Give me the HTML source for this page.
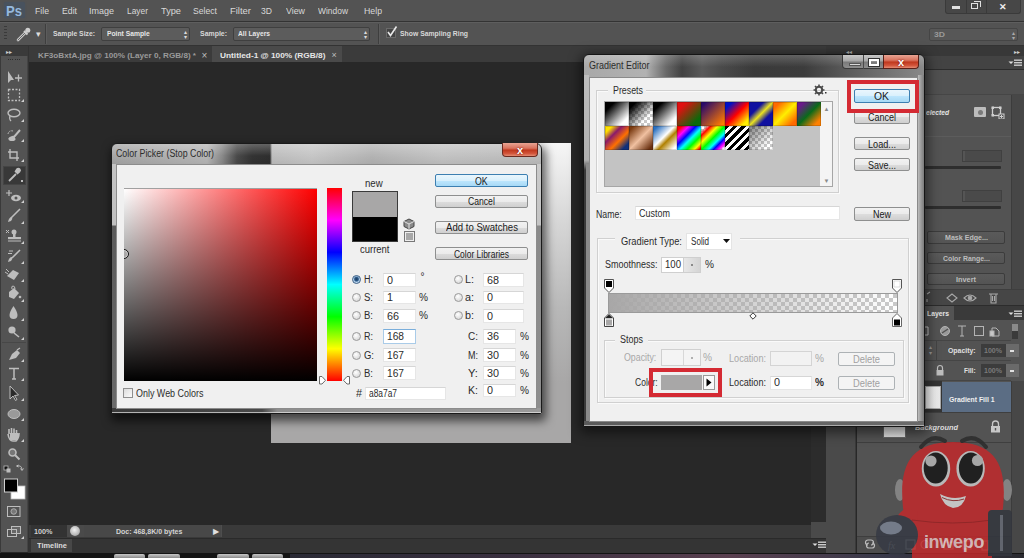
<!DOCTYPE html>
<html><head><meta charset="utf-8"><style>
html,body{margin:0;padding:0;}
body{width:1024px;height:558px;overflow:hidden;position:relative;background:#282828;font-family:"Liberation Sans",sans-serif;}
body div{position:absolute;box-sizing:border-box;}
.t{white-space:pre;line-height:1;}

</style></head><body>
<div style="left:0px;top:0px;width:1024px;height:21px;background:#535353;"></div>
<div style="left:0px;top:21px;width:1024px;height:1px;background:#333333;"></div>
<div style="left:0px;top:22px;width:1024px;height:1px;background:#5e5e5e;"></div>
<div style="left:4px;top:2px;width:21px;height:16px;background:#48525e;border-radius:2px;box-shadow:0 0 2px #48525e;"></div>
<div class="t" style="left:5.5px;top:3.4px;font-size:15px;color:#94b8de;transform:scaleX(0.871);transform-origin:0 0;font-weight:bold;">Ps</div>
<div class="t" style="left:35.0px;top:6.9px;font-size:9px;color:#d8d8d8;transform:scaleX(0.964);transform-origin:0 0;">File</div>
<div class="t" style="left:61.5px;top:6.9px;font-size:9px;color:#d8d8d8;transform:scaleX(0.967);transform-origin:0 0;">Edit</div>
<div class="t" style="left:89.0px;top:6.9px;font-size:9px;color:#d8d8d8;">Image</div>
<div class="t" style="left:127.0px;top:6.9px;font-size:9px;color:#d8d8d8;transform:scaleX(0.933);transform-origin:0 0;">Layer</div>
<div class="t" style="left:161.0px;top:6.9px;font-size:9px;color:#d8d8d8;transform:scaleX(1.025);transform-origin:0 0;">Type</div>
<div class="t" style="left:193.0px;top:6.9px;font-size:9px;color:#d8d8d8;transform:scaleX(0.959);transform-origin:0 0;">Select</div>
<div class="t" style="left:230.0px;top:6.9px;font-size:9px;color:#d8d8d8;transform:scaleX(1.050);transform-origin:0 0;">Filter</div>
<div class="t" style="left:261.0px;top:6.9px;font-size:9px;color:#d8d8d8;transform:scaleX(0.955);transform-origin:0 0;">3D</div>
<div class="t" style="left:285.6px;top:6.9px;font-size:9px;color:#d8d8d8;transform:scaleX(0.981);transform-origin:0 0;">View</div>
<div class="t" style="left:317.5px;top:6.9px;font-size:9px;color:#d8d8d8;transform:scaleX(0.937);transform-origin:0 0;">Window</div>
<div class="t" style="left:363.5px;top:6.9px;font-size:9px;color:#d8d8d8;transform:scaleX(0.972);transform-origin:0 0;">Help</div>
<div style="left:945px;top:0px;width:76px;height:14px;background:#474747;border:1px solid #3a3a3a;border-top:none;border-radius:0 0 3px 3px;"></div>
<div style="left:966px;top:0px;width:1px;height:14px;background:#3a3a3a;"></div>
<div style="left:986px;top:0px;width:1px;height:14px;background:#3a3a3a;"></div>
<div style="left:952px;top:6px;width:8px;height:3px;background:#e0e0e0;"></div>
<div style="left:971px;top:3px;width:7px;height:6px;border:1.5px solid #e0e0e0;"></div>
<div style="left:974px;top:1px;width:7px;height:6px;border:1.5px solid #e0e0e0;border-left:none;border-bottom:none;"></div>
<div class="t" style="left:999.0px;top:3.2px;font-size:9px;color:#eeeeee;font-weight:bold;">✕</div>
<div style="left:0px;top:23px;width:1024px;height:22px;background:#535353;"></div>
<div style="left:0px;top:45px;width:1024px;height:1px;background:#333333;"></div>
<div style="left:4px;top:26px;width:3px;height:1px;background:#3a3a3a;"></div>
<div style="left:4px;top:29px;width:3px;height:1px;background:#3a3a3a;"></div>
<div style="left:4px;top:32px;width:3px;height:1px;background:#3a3a3a;"></div>
<div style="left:4px;top:35px;width:3px;height:1px;background:#3a3a3a;"></div>
<div style="left:4px;top:38px;width:3px;height:1px;background:#3a3a3a;"></div>
<svg style="position:absolute;left:10px;top:22px" width="24" height="22" viewBox="10 22 24 22"><path d="M18 40 L25 33" stroke="#c8c8c8" stroke-width="2.6" stroke-linecap="round"/><path d="M18 40 L25 33" stroke="#5a5a5a" stroke-width="0.9" stroke-linecap="round"/><path d="M24 31 L27.5 34.5" stroke="#cfcfcf" stroke-width="2"/><circle cx="27.8" cy="30.2" r="2.5" fill="#cfcfcf"/></svg>
<div class="t" style="left:36.0px;top:29.7px;font-size:9px;color:#dddddd;">▾</div>
<div style="left:45px;top:24px;width:1px;height:20px;background:#3e3e3e;"></div>
<div style="left:46px;top:24px;width:1px;height:20px;background:#5c5c5c;"></div>
<div class="t" style="left:53.0px;top:30.2px;font-size:8px;color:#d8d8d8;transform:scaleX(0.851);transform-origin:0 0;font-weight:bold;">Sample Size:</div>
<div style="left:101px;top:27px;width:89px;height:14px;background:#5c5c5c;border:1px solid #3f3f3f;border-radius:2px;"></div>
<div class="t" style="left:106.8px;top:30.2px;font-size:8px;color:#e6e6e6;transform:scaleX(0.842);transform-origin:0 0;font-weight:bold;">Point Sample</div>
<div class="t" style="left:183.5px;top:28.5px;font-size:6px;color:#dddddd;">▴</div>
<div class="t" style="left:183.5px;top:33.5px;font-size:6px;color:#dddddd;">▾</div>
<div class="t" style="left:200.0px;top:30.2px;font-size:8px;color:#d8d8d8;transform:scaleX(0.867);transform-origin:0 0;font-weight:bold;">Sample:</div>
<div style="left:233px;top:27px;width:137px;height:14px;background:#5c5c5c;border:1px solid #3f3f3f;border-radius:2px;"></div>
<div class="t" style="left:238.0px;top:30.2px;font-size:8px;color:#e6e6e6;transform:scaleX(0.837);transform-origin:0 0;font-weight:bold;">All Layers</div>
<div class="t" style="left:363.5px;top:28.5px;font-size:6px;color:#dddddd;">▴</div>
<div class="t" style="left:363.5px;top:33.5px;font-size:6px;color:#dddddd;">▾</div>
<div style="left:378px;top:24px;width:1px;height:20px;background:#3e3e3e;"></div>
<div style="left:379px;top:24px;width:1px;height:20px;background:#5c5c5c;"></div>
<div style="left:386px;top:28px;width:10px;height:10px;background:#444;border:1px solid #6a6a6a;"></div>
<svg style="position:absolute;left:386px;top:25px" width="12" height="13" viewBox="0 0 12 13"><path d="M2 7 L4.5 10.5 L10.5 1.5" stroke="#e8e8e8" stroke-width="1.6" fill="none"/></svg>
<div class="t" style="left:399.7px;top:30.2px;font-size:8px;color:#d8d8d8;transform:scaleX(0.855);transform-origin:0 0;font-weight:bold;">Show Sampling Ring</div>
<div style="left:929px;top:28px;width:89px;height:13px;background:#575757;border:1px solid #454545;border-radius:2px;"></div>
<div class="t" style="left:934.0px;top:31.1px;font-size:8px;color:#9a9a9a;transform:scaleX(1.075);transform-origin:0 0;font-weight:bold;">3D</div>
<div class="t" style="left:1011.5px;top:29.5px;font-size:6px;color:#aaaaaa;">▴</div>
<div class="t" style="left:1011.5px;top:34.5px;font-size:6px;color:#aaaaaa;">▾</div>
<div style="left:29px;top:46px;width:797px;height:16px;background:#3b3b3b;"></div>
<div class="t" style="left:37.7px;top:51.6px;font-size:8px;color:#9a9a9a;transform:scaleX(1.017);transform-origin:0 0;font-weight:bold;">KF3oBxtA.jpg @ 100% (Layer 0, RGB/8) *</div>
<div class="t" style="left:201.6px;top:50.8px;font-size:10px;color:#bdbdbd;">×</div>
<div style="left:212px;top:46px;width:130px;height:16px;background:#4a4a4a;"></div>
<div class="t" style="left:220.0px;top:51.6px;font-size:8px;color:#e6e6e6;transform:scaleX(1.038);transform-origin:0 0;font-weight:bold;">Untitled-1 @ 100% (RGB/8)</div>
<div class="t" style="left:331.4px;top:51.2px;font-size:9px;color:#bdbdbd;">×</div>
<div style="left:0px;top:46px;width:29px;height:10px;background:#3a3a3a;"></div>
<div class="t" style="left:6.0px;top:48.5px;font-size:6px;color:#cfcfcf;">▸▸</div>
<div style="left:1px;top:56px;width:27px;height:496px;background:#535353;border-right:1px solid #444;"></div>
<div style="left:0px;top:46px;width:1px;height:512px;background:#3a3a3a;"></div>
<div style="left:8.0px;top:59px;width:1px;height:1px;background:#2f2f2f;"></div>
<div style="left:10.2px;top:59px;width:1px;height:1px;background:#2f2f2f;"></div>
<div style="left:12.4px;top:59px;width:1px;height:1px;background:#2f2f2f;"></div>
<div style="left:14.600000000000001px;top:59px;width:1px;height:1px;background:#2f2f2f;"></div>
<div style="left:16.8px;top:59px;width:1px;height:1px;background:#2f2f2f;"></div>
<div style="left:19.0px;top:59px;width:1px;height:1px;background:#2f2f2f;"></div>
<div style="left:3px;top:166px;width:23px;height:19px;background:#383838;border:1px solid #444;"></div>
<div style="left:28px;top:46px;width:1px;height:510px;background:#333;"></div>
<div style="left:29px;top:525px;width:797px;height:13px;background:#3a3a3a;"></div>
<div style="left:31px;top:525px;width:36px;height:12px;background:#333333;"></div>
<div class="t" style="left:33.7px;top:527.9px;font-size:8px;color:#d0d0d0;transform:scaleX(0.904);transform-origin:0 0;font-weight:bold;">100%</div>
<div style="left:67px;top:525px;width:17px;height:12px;background:#4a4a4a;"></div>
<div style="left:70px;top:526px;width:10px;height:10px;background:radial-gradient(circle at 45% 40%,#f0f0f0,#b8b8b8 60%,#888 100%);border-radius:50%;"></div>
<div style="left:211px;top:525px;width:11px;height:12px;background:#4e4e4e;border-left:1px solid #3a3a3a;"></div>
<div style="left:84px;top:525px;width:137px;height:12px;background:#484848;"></div>
<div class="t" style="left:115.7px;top:527.9px;font-size:8px;color:#d4d4d4;transform:scaleX(0.878);transform-origin:0 0;font-weight:bold;">Doc: 468,8K/0 bytes</div>
<div class="t" style="left:213.0px;top:527.6px;font-size:8px;color:#e0e0e0;">▶</div>
<div style="left:29px;top:538px;width:797px;height:15px;background:#343434;border-top:1px solid #2a2a2a;"></div>
<div style="left:31px;top:539px;width:41px;height:13px;background:#474747;"></div>
<div class="t" style="left:36.6px;top:542.4px;font-size:8px;color:#dcdcdc;transform:scaleX(0.928);transform-origin:0 0;font-weight:bold;">Timeline</div>
<div style="left:0px;top:553px;width:1024px;height:5px;background:#141414;"></div>
<div style="left:114px;top:554px;width:31px;height:4px;background:linear-gradient(#c8c8c8,#8a8a8a);border-radius:2px 2px 0 0;"></div>
<div style="left:148px;top:554px;width:32px;height:4px;background:linear-gradient(#c8c8c8,#8a8a8a);border-radius:2px 2px 0 0;"></div>
<div style="left:217px;top:554px;width:32px;height:4px;background:linear-gradient(#c8c8c8,#8a8a8a);border-radius:2px 2px 0 0;"></div>
<div style="left:252px;top:554px;width:31px;height:4px;background:linear-gradient(#c8c8c8,#8a8a8a);border-radius:2px 2px 0 0;"></div>
<div style="left:290px;top:554px;width:734px;height:4px;background:linear-gradient(to right,#2a2a35,#3a3040 30%,#5a4050 60%,#3a3a4a 80%,#2a2a30);"></div>
<div style="left:826px;top:46px;width:198px;height:10px;background:#383838;"></div>
<div class="t" style="left:846.0px;top:48.5px;font-size:6px;color:#bdbdbd;">◂◂</div>
<div class="t" style="left:1014.0px;top:48.5px;font-size:6px;color:#d0d0d0;">▸▸</div>
<div style="left:826px;top:56px;width:30px;height:497px;background:#4a4a4a;border-right:1px solid #3a3a3a;"></div>
<div style="left:826px;top:56px;width:30px;height:13px;background:#3c3c3c;"></div>
<div style="left:857px;top:56px;width:167px;height:497px;background:#535353;"></div>
<div style="left:857px;top:56px;width:167px;height:13px;background:#434343;"></div>
<div style="left:857px;top:69px;width:167px;height:1px;background:#2c2c2c;"></div>
<svg style="position:absolute;left:1008px;top:58px" width="14" height="9" viewBox="0 0 14 9"><path d="M0.5 3.5 L3 6 L5.5 3.5Z" fill="#ddd"/><rect x="6" y="1.5" width="8" height="1.4" fill="#ccc"/><rect x="6" y="4" width="8" height="1.4" fill="#ccc"/><rect x="6" y="6.5" width="8" height="1.4" fill="#ccc"/></svg>
<div style="left:857px;top:70px;width:167px;height:24px;background:#505050;"></div>
<div style="left:857px;top:94px;width:167px;height:1px;background:#464646;"></div>
<div style="left:1011px;top:95px;width:13px;height:195px;background:#474747;border-left:1px solid #3c3c3c;"></div>
<div class="t" style="left:926.0px;top:108.6px;font-size:8px;color:#e4e4e4;transform:scaleX(0.834);transform-origin:0 0;font-style:italic;font-weight:bold;">elected</div>
<div style="left:974px;top:107px;width:12px;height:10px;background:#bdbdbd;border-radius:1px;"></div>
<div style="left:977.5px;top:109.5px;width:5px;height:5px;background:#7a7a7a;border-radius:50%;"></div>
<svg style="position:absolute;left:991px;top:106px" width="14" height="13" viewBox="0 0 14 13"><rect x="1.5" y="1.5" width="8" height="8" fill="none" stroke="#cfcfcf" stroke-width="1.3"/><rect x="0.5" y="0.5" width="2.5" height="2.5" fill="#cfcfcf"/><rect x="8" y="0.5" width="2.5" height="2.5" fill="#cfcfcf"/><rect x="0.5" y="8" width="2.5" height="2.5" fill="#cfcfcf"/><rect x="8" y="8" width="5" height="5" fill="#535353" stroke="#cfcfcf" stroke-width="1"/><path d="M10.5 9 V12 M9 10.5 H12" stroke="#cfcfcf" stroke-width="1"/></svg>
<div style="left:857px;top:136px;width:154px;height:1px;background:#5c5c5c;"></div>
<div style="left:962px;top:150px;width:40px;height:12px;background:#4a4a4a;border:1px solid #404040;box-shadow:inset 2px 0 0 #555;"></div>
<div style="left:925px;top:166px;width:76px;height:3px;background:#2e2e2e;border-radius:1px;"></div>
<div style="left:962px;top:190px;width:40px;height:12px;background:#4a4a4a;border:1px solid #404040;box-shadow:inset 2px 0 0 #555;"></div>
<div style="left:925px;top:206px;width:76px;height:3px;background:#2e2e2e;border-radius:1px;"></div>
<div style="left:927px;top:231px;width:78px;height:12.5px;background:linear-gradient(#5a5a5a,#545454);border:1px solid #3c3c3c;border-radius:2px;"></div>
<div class="t" style="left:944.5px;top:234.2px;font-size:8px;color:#bdbdbd;transform:scaleX(0.887);transform-origin:0 0;font-weight:bold;">Mask Edge...</div>
<div style="left:927px;top:252px;width:78px;height:12px;background:linear-gradient(#5a5a5a,#545454);border:1px solid #3c3c3c;border-radius:2px;"></div>
<div class="t" style="left:942.6px;top:254.9px;font-size:8px;color:#bdbdbd;transform:scaleX(0.863);transform-origin:0 0;font-weight:bold;">Color Range...</div>
<div style="left:927px;top:272.6px;width:78px;height:12.399999999999977px;background:linear-gradient(#5a5a5a,#545454);border:1px solid #3c3c3c;border-radius:2px;"></div>
<div class="t" style="left:956.0px;top:275.7px;font-size:8px;color:#bdbdbd;transform:scaleX(0.918);transform-origin:0 0;font-weight:bold;">Invert</div>
<div style="left:857px;top:289px;width:167px;height:16px;background:#464646;border-top:1px solid #3e3e3e;"></div>
<svg style="position:absolute;left:925px;top:290px" width="90" height="15" viewBox="0 0 90 15"><g fill="none" stroke="#a8a8a8" stroke-width="1.1"><path d="M2 4 L5 2 M2 9 L2 12"/><path d="M22 8 L27 4 L32 8 L27 12 Z"/><path d="M39 8 Q45 2 51 8 Q45 14 39 8 Z"/><circle cx="45" cy="8" r="1.8" fill="#a8a8a8"/><path d="M64 4 H73 M66 4 V13 H71 V4 M67.5 6 V11 M69.5 6 V11"/></g></svg>
<div style="left:857px;top:305px;width:167px;height:1px;background:#2c2c2c;"></div>
<div style="left:857px;top:306px;width:167px;height:14px;background:#3a3a3a;"></div>
<div style="left:924px;top:306px;width:30px;height:14px;background:#535353;"></div>
<div class="t" style="left:927.0px;top:309.9px;font-size:8px;color:#e6e6e6;transform:scaleX(0.853);transform-origin:0 0;font-weight:bold;">Layers</div>
<svg style="position:absolute;left:1008px;top:309px" width="14" height="9" viewBox="0 0 14 9"><path d="M0.5 3.5 L3 6 L5.5 3.5Z" fill="#ddd"/><rect x="6" y="1.5" width="8" height="1.4" fill="#ccc"/><rect x="6" y="4" width="8" height="1.4" fill="#ccc"/><rect x="6" y="6.5" width="8" height="1.4" fill="#ccc"/></svg>
<svg style="position:absolute;left:924px;top:322px" width="100" height="18" viewBox="0 0 100 18"><g fill="none" stroke="#b4b4b4" stroke-width="1"><circle cx="21" cy="9" r="4.5" fill="#9a9a9a"/><path d="M18 11 L24 7" stroke="#535353" stroke-width="1.5"/><path d="M34 4 H42 M38 4 V14 M36 14 H40"/><rect x="50.5" y="4.5" width="9" height="9"/><path d="M68 6 H72 L75 9 V14 H68 Z"/><rect x="66" y="9" width="4" height="5" fill="#c8c8c8"/></g><rect x="88" y="2" width="6" height="15" fill="#3a3a3a"/><rect x="88" y="2" width="6" height="7" fill="#8a8a8a"/><path d="M1 5 H4 V13 H1" stroke="#c8c8c8" fill="none"/></svg>
<div style="left:857px;top:340px;width:154px;height:1px;background:#454545;"></div>
<div style="left:924px;top:341px;width:13px;height:19px;border-right:1px solid #444;"></div>
<div class="t" style="left:928.5px;top:343.5px;font-size:6px;color:#999;">▴</div>
<div class="t" style="left:928.5px;top:349.5px;font-size:6px;color:#999;">▾</div>
<div class="t" style="left:948.0px;top:346.9px;font-size:8px;color:#e0e0e0;transform:scaleX(0.862);transform-origin:0 0;font-weight:bold;">Opacity:</div>
<div style="left:980.5px;top:343.5px;width:25px;height:13px;background:#3c3c3c;"></div>
<div class="t" style="left:983.7px;top:346.9px;font-size:8px;color:#7a7a7a;transform:scaleX(0.879);transform-origin:0 0;font-weight:bold;">100%</div>
<div style="left:1006px;top:343.5px;width:13px;height:13px;background:#6a6a6a;"></div>
<div style="left:1010px;top:349.5px;width:4px;height:2px;background:#e0e0e0;"></div>
<div style="left:857px;top:360px;width:154px;height:1px;background:#454545;"></div>
<svg style="position:absolute;left:935px;top:364px" width="10" height="12" viewBox="0 0 10 12"><path d="M2.5 6 V4 A2.5 2.5 0 0 1 7.5 4 V6" stroke="#bdbdbd" stroke-width="1.2" fill="none"/><rect x="1.5" y="6" width="7" height="5.5" fill="#bdbdbd"/></svg>
<div class="t" style="left:964.0px;top:366.9px;font-size:8px;color:#e0e0e0;transform:scaleX(0.816);transform-origin:0 0;font-weight:bold;">Fill:</div>
<div style="left:980.5px;top:364px;width:25px;height:12.5px;background:#3c3c3c;"></div>
<div class="t" style="left:983.7px;top:366.9px;font-size:8px;color:#7a7a7a;transform:scaleX(0.879);transform-origin:0 0;font-weight:bold;">100%</div>
<div style="left:1006px;top:364px;width:13px;height:12.5px;background:#6a6a6a;"></div>
<div style="left:1010px;top:369.5px;width:4px;height:2px;background:#e0e0e0;"></div>
<div style="left:857px;top:380px;width:154px;height:1px;background:#454545;"></div>
<div style="left:857px;top:382px;width:154px;height:30px;background:#5b6d84;"></div>
<div style="left:923px;top:381px;width:19px;height:32px;background:#353535;"></div>
<div style="left:924.8px;top:386px;width:16.2px;height:23px;background:linear-gradient(to right,#f6f6f6,#e8e8e8);border:1px solid #aaa;"></div>
<div style="left:883px;top:386px;width:23px;height:23px;background:#f0f0f0;border:1px solid #888;"></div>
<div class="t" style="left:948.5px;top:395.5px;font-size:8px;color:#f0f0f0;transform:scaleX(0.853);transform-origin:0 0;font-weight:bold;">Gradient Fill 1</div>
<div style="left:857px;top:412px;width:154px;height:1px;background:#3f3f3f;"></div>
<div style="left:883px;top:420px;width:23px;height:18px;background:linear-gradient(#f4f4f4,#e0e0e0);border:1px solid #666;"></div>
<div class="t" style="left:915.0px;top:424.1px;font-size:8px;color:#dddddd;transform:scaleX(0.921);transform-origin:0 0;font-style:italic;font-weight:bold;">Background</div>
<svg style="position:absolute;left:990px;top:420px" width="11" height="13" viewBox="0 0 11 13"><path d="M2.5 6 V4 A3 3 0 0 1 8.5 4 V6" stroke="#c8c8c8" stroke-width="1.3" fill="none"/><rect x="1" y="6" width="9" height="6.5" fill="#c8c8c8"/><rect x="4.8" y="8" width="1.4" height="2.5" fill="#535353"/></svg>
<div style="left:857px;top:442px;width:154px;height:1px;background:#3f3f3f;"></div>
<div style="left:1011px;top:381px;width:13px;height:172px;background:#474747;border-left:1px solid #3c3c3c;"></div>
<div style="left:857px;top:536px;width:154px;height:17px;background:#4c4c4c;border-top:1px solid #3e3e3e;"></div>
<svg style="position:absolute;left:860px;top:538px" width="150" height="14" viewBox="0 0 150 14"><g fill="none" stroke="#bdbdbd" stroke-width="1.2"><path d="M8 7 a2.5 2.5 0 0 1 0-5 h3 a2.5 2.5 0 0 1 0 5 M12 5 a2.5 2.5 0 0 1 0 5 h-3 a2.5 2.5 0 0 1 0-5"/><text x="28" y="11" font-size="10" font-style="italic" fill="#bdbdbd" stroke="none" font-family="Liberation Serif">fx</text><rect x="46" y="2" width="9" height="9"/><circle cx="65" cy="6.5" r="4"/><path d="M84 4 H93 V11 H84 Z M84 4 L86 2 H89"/><rect x="103" y="3" width="8" height="8"/><path d="M121 3 H129 M122 4 V12 H128 V4"/></g></svg>
<div style="left:811px;top:62px;width:15px;height:463px;background:#2c2c2c;"></div>
<div style="left:811px;top:522px;width:15px;height:16px;background:#4a4a4a;"></div>
<svg style="position:absolute;left:812px;top:540px" width="14" height="10" viewBox="0 0 14 10"><path d="M0.5 3.5 L3 6 L5.5 3.5Z" fill="#ddd"/><rect x="6" y="1.5" width="8" height="1.4" fill="#ccc"/><rect x="6" y="4" width="8" height="1.4" fill="#ccc"/><rect x="6" y="6.5" width="8" height="1.4" fill="#ccc"/></svg>
<svg style="position:absolute;left:0px;top:0px" width="29" height="552" viewBox="0 0 29 552"><path d="M8 71 L8 83 L11 80 L14 80 Z" fill="#bdbdbd"/><path d="M15 78 H22 M18.5 74.5 V81.5" stroke="#bdbdbd" stroke-width="1.3"/><rect x="8.5" y="89.5" width="11" height="11" fill="none" stroke="#bdbdbd" stroke-width="1.3" stroke-dasharray="2 1.5"/><path d="M21 102 L24 102 L24 99 Z" fill="#d0d0d0"/><ellipse cx="14" cy="113" rx="6" ry="3.8" fill="none" stroke="#bdbdbd" stroke-width="1.4"/><path d="M10 116 Q9 119 11 121" stroke="#bdbdbd" stroke-width="1.3" fill="none"/><path d="M21 122 L24 122 L24 119 Z" fill="#d0d0d0"/><path d="M9 139 Q12 136 14 137 L20 130" stroke="#bdbdbd" stroke-width="2" fill="none"/><path d="M8 134 Q9 130 13 131" stroke="#bdbdbd" stroke-width="1" stroke-dasharray="1.5 1" fill="none"/><ellipse cx="12" cy="139" rx="3.5" ry="2" fill="#bdbdbd"/><path d="M21 142 L24 142 L24 139 Z" fill="#d0d0d0"/><path d="M10 149 V158 H19 M8 152 H17 V161" stroke="#bdbdbd" stroke-width="1.4" fill="none"/><path d="M21 162 L24 162 L24 159 Z" fill="#d0d0d0"/><path d="M9 181 L16 174" stroke="#bdbdbd" stroke-width="1.8"/><path d="M15 171 L18 174 M17 169 a1.8 1.8 0 0 1 2.6 2.6 L17.5 173.5 L15.5 171.5 Z" stroke="#bdbdbd" stroke-width="1.5" fill="#bdbdbd"/><rect x="21" y="180" width="2" height="2" fill="#bdbdbd"/><path d="M9 190 V196 M6 193 H12" stroke="#bdbdbd" stroke-width="1.2"/><ellipse cx="16" cy="198" rx="5" ry="3.2" fill="#bdbdbd"/><circle cx="16" cy="198" r="1.5" fill="#535353"/><path d="M21 203 L24 203 L24 200 Z" fill="#d0d0d0"/><path d="M11 218 L20 209" stroke="#bdbdbd" stroke-width="1.6"/><path d="M8 222 Q9 217 12 217 Q13 219 11 221 Z" fill="#bdbdbd"/><path d="M21 224 L24 224 L24 221 Z" fill="#d0d0d0"/><path d="M6 230 L9 233 M9 230 L6 233" stroke="#bdbdbd" stroke-width="1"/><circle cx="14" cy="232" r="2.5" fill="#bdbdbd"/><rect x="13" y="233" width="2.5" height="4" fill="#bdbdbd"/><rect x="8" y="237" width="13" height="2.2" fill="#bdbdbd"/><rect x="8" y="240.5" width="13" height="1" fill="#bdbdbd"/><path d="M21 244 L24 244 L24 241 Z" fill="#d0d0d0"/><path d="M9 251 H13 M8 253.5 H12" stroke="#bdbdbd" stroke-width="1"/><path d="M12 258 L20 250" stroke="#bdbdbd" stroke-width="1.6"/><path d="M8 262 Q9 257 12 257 Q13 259 11 261 Z" fill="#bdbdbd"/><path d="M21 264 L24 264 L24 261 Z" fill="#d0d0d0"/><path d="M7 276 L13 270 L19 273 L14 280 Z" fill="#bdbdbd"/><path d="M5 272 L8 274 M6 269 L9 272" stroke="#bdbdbd" stroke-width="1"/><path d="M21 282 L24 282 L24 279 Z" fill="#d0d0d0"/><path d="M9 292 L14 288 L19 293 L14 299 L9 297 Z" fill="#bdbdbd"/><path d="M12 289 Q11 286 13 286 Q15 286 15 289" stroke="#bdbdbd" stroke-width="1" fill="none"/><circle cx="20" cy="297" r="1.3" fill="#bdbdbd"/><path d="M21 302 L24 302 L24 299 Z" fill="#d0d0d0"/><path d="M13.5 306 Q17.5 312 17.5 315 A4 4 0 0 1 9.5 315 Q9.5 312 13.5 306 Z" fill="#bdbdbd"/><path d="M21 321 L24 321 L24 318 Z" fill="#d0d0d0"/><circle cx="12" cy="330" r="3.6" fill="#bdbdbd"/><path d="M14 333 L19 337" stroke="#bdbdbd" stroke-width="1.6"/><path d="M21 340 L24 340 L24 337 Z" fill="#d0d0d0"/><rect x="2" y="342" width="24" height="1" fill="#474747"/><path d="M9 360 L12 354 L17 350 L20 353 L16 358 Z" fill="#bdbdbd"/><path d="M17 350 L20 348" stroke="#bdbdbd" stroke-width="1.4"/><path d="M21 362 L24 362 L24 359 Z" fill="#d0d0d0"/><path d="M9 368.5 H19 M14 368.5 V379 M12 379 H16" stroke="#bdbdbd" stroke-width="1.5" fill="none"/><path d="M21 381 L24 381 L24 378 Z" fill="#d0d0d0"/><path d="M10 386 V399 L13 396 L15.5 400.5 L17 399.5 L14.5 395.5 L18.5 395 Z" fill="#2a2a2a" stroke="#bdbdbd" stroke-width="1"/><path d="M21 401 L24 401 L24 398 Z" fill="#d0d0d0"/><ellipse cx="14" cy="414" rx="6" ry="4.5" fill="#9a9a9a" stroke="#bdbdbd" stroke-width="1"/><path d="M21 421 L24 421 L24 418 Z" fill="#d0d0d0"/><path d="M9 434 V429 M11.5 433 V428 M14 433 V428.5 M16.5 434 V430 M8 434 Q9 441 13 441 H16 Q19 438 19 433" stroke="#bdbdbd" stroke-width="1.6" fill="none"/><rect x="10" y="433" width="8" height="7" fill="#bdbdbd"/><path d="M21 442 L24 442 L24 439 Z" fill="#d0d0d0"/><circle cx="12.5" cy="452.5" r="3.5" fill="#777" stroke="#bdbdbd" stroke-width="1.6"/><path d="M15 455 L19.5 459.5" stroke="#bdbdbd" stroke-width="2"/><rect x="4" y="466" width="4" height="4" fill="#111" stroke="#bdbdbd" stroke-width="0.8"/><rect x="6.5" y="468.5" width="4" height="4" fill="#bdbdbd"/><path d="M17 466 Q22 465 22 470 M20.5 468.5 L22 470.5 L23.5 468.5 M18.5 467 L16.5 466 L18.5 465" stroke="#bdbdbd" stroke-width="1" fill="none"/><rect x="11" y="486" width="14" height="13" fill="#fff" stroke="#bdbdbd" stroke-width="0.8"/><rect x="4.5" y="479" width="13" height="13" fill="#000" stroke="#cfcfcf" stroke-width="1"/><rect x="7.5" y="506.5" width="12.5" height="10" fill="none" stroke="#bdbdbd" stroke-width="1"/><circle cx="13.75" cy="511.5" r="2.8" fill="#777" stroke="#bdbdbd" stroke-width="0.8"/><rect x="11.5" y="526.5" width="9" height="7" fill="#666" stroke="#bdbdbd" stroke-width="1"/><rect x="7.5" y="529.5" width="9" height="7" fill="none" stroke="#bdbdbd" stroke-width="1"/><path d="M21 539 L24 539 L24 536 Z" fill="#d0d0d0"/></svg>
<div style="left:271px;top:143px;width:300px;height:300px;background:linear-gradient(to bottom,#f6f6f6 0%,#d8d8d8 25%,#b8b8b8 55%,#a8a7a7 80%,#a8a7a7 100%);"></div>
<div style="left:111px;top:143px;width:431px;height:271px;border-radius:6px 6px 2px 2px;border:1px solid #1a1a1a;box-shadow:2px 5px 10px 2px rgba(0,0,0,0.6);background:linear-gradient(to right,#a6a6a6 0px,#b6b6b6 95px,#8a8a8a 110px,#4a4a4a 125px,#333 140px,#2e2e2e 158px,#bdbdbd 160px,#c6c6c6 200px,#b3b3b3 260px,#c2c2c2 330px,#bcbcbc 431px);"></div>
<div style="left:112px;top:144px;width:429px;height:20px;border-radius:5px 5px 0 0;background:linear-gradient(to bottom,rgba(255,255,255,0.25),rgba(255,255,255,0) 60%,rgba(0,0,0,0.05));"></div>
<div class="t" style="left:116.0px;top:149.4px;font-size:10px;color:#2c2c2c;transform:scaleX(0.882);transform-origin:0 0;">Color Picker (Stop Color)</div>
<div style="left:112px;top:408px;width:429px;height:5px;background:linear-gradient(to right,#3a3a3a 0,#4a4a4a 150px,#8e8e8e 165px,#9a9a9a 431px);"></div>
<div style="left:112px;top:412px;width:429px;height:1px;background:rgba(230,230,230,0.7);"></div>
<div style="left:112px;top:164px;width:4px;height:244px;background:linear-gradient(to bottom,#c4c4c4 0,#c0c0c0 61px,#5a5a5a 62px,#6a6a6a 100%);"></div>
<div style="left:536px;top:164px;width:5px;height:244px;background:linear-gradient(to bottom,#cacaca 0,#c4c4c4 61px,#8a8a8a 62px,#8e8e8e 100%);"></div>
<div style="left:502px;top:143px;width:36px;height:14px;border:1px solid #6b2a20;border-top:none;border-radius:0 0 4px 4px;background:linear-gradient(to bottom,#e8a493 0,#d9735e 40%,#c0391f 55%,#d2543a 80%,#e48c73 100%);"></div>
<div class="t" style="left:516.9px;top:145.0px;font-size:11px;color:#ffffff;font-weight:bold;text-shadow:0 0 2px #600;">x</div>
<div style="left:116px;top:164px;width:421px;height:245px;background:#f0f0f0;border:1px solid #8c8c8c;"></div>
<div style="left:124px;top:188px;width:193px;height:193px;background:linear-gradient(to bottom,rgba(0,0,0,0),#000),linear-gradient(to right,#fff,#f00);border-top:1px solid #a0a0a0;"></div>
<div style="left:124px;top:246px;width:10px;height:16px;overflow:hidden;"><div style="left:-5px;top:3px;width:10px;height:10px;border-radius:50%;border:1.5px solid #111;box-shadow:inset 0 0 0 1px rgba(255,255,255,0.5);"></div></div>
<div style="left:327px;top:188px;width:15px;height:193px;background:linear-gradient(to bottom,#f00 0%,#f0f 16.7%,#00f 33.3%,#0ff 50%,#0f0 66.7%,#ff0 83.3%,#f00 100%);"></div>
<svg style="position:absolute;left:310px;top:370px" width="50" height="20" viewBox="310 370 50 20"><path d="M319.5 376.5 L322 376.5 L325.5 380.3 L322 384 L319.5 384 Z" fill="#fff" stroke="#6a6a6a" stroke-width="1"/><path d="M349.5 376.5 L347 376.5 L343.5 380.3 L347 384 L349.5 384 Z" fill="#fff" stroke="#6a6a6a" stroke-width="1"/></svg>
<div class="t" style="left:365.1px;top:179.2px;font-size:10px;color:#2c2c2c;transform:scaleX(0.964);transform-origin:0 0;">new</div>
<div style="left:352px;top:191px;width:46px;height:51px;border:1px solid #3a3a3a;background:linear-gradient(to bottom,#a8a7a7 0,#a8a7a7 50%,#000 50%,#000 100%);"></div>
<div class="t" style="left:359.5px;top:245.4px;font-size:10px;color:#2c2c2c;transform:scaleX(0.948);transform-origin:0 0;">current</div>
<svg style="position:absolute;left:403px;top:218px" width="12" height="12" viewBox="0 0 12 12"><path d="M6 1 L11 3.5 L11 8.5 L6 11 L1 8.5 L1 3.5 Z" fill="#8a8a8a" stroke="#444" stroke-width="1"/><path d="M1 3.5 L6 6 L11 3.5 M6 6 L6 11" fill="none" stroke="#e0e0e0" stroke-width="1"/></svg>
<div style="left:404px;top:231px;width:11px;height:11px;border:1px solid #777;background:#a8a8a8;box-shadow:inset 0 0 0 1px #eee;"></div>
<div style="left:435px;top:174px;width:93px;height:13px;background:linear-gradient(to bottom,#eaf6fd 0%,#d9f0fc 50%,#bee6fd 51%,#a7d9f5 100%);border:1px solid #3c7fb1;border-radius:2px;"></div>
<div class="t" style="left:475.1px;top:176.9px;font-size:10px;color:#1a1a1a;transform:scaleX(0.879);transform-origin:0 0;">OK</div>
<div style="left:435px;top:194.5px;width:93px;height:13.0px;background:linear-gradient(to bottom,#f2f2f2 0%,#ebebeb 50%,#dddddd 51%,#cfcfcf 100%);border:1px solid #8e8f8f;border-radius:2px;"></div>
<div class="t" style="left:468.1px;top:197.4px;font-size:10px;color:#1a1a1a;transform:scaleX(0.861);transform-origin:0 0;">Cancel</div>
<div style="left:435px;top:220.5px;width:93px;height:13.0px;background:linear-gradient(to bottom,#f2f2f2 0%,#ebebeb 50%,#dddddd 51%,#cfcfcf 100%);border:1px solid #8e8f8f;border-radius:2px;"></div>
<div class="t" style="left:445.5px;top:223.4px;font-size:10px;color:#1a1a1a;transform:scaleX(0.959);transform-origin:0 0;">Add to Swatches</div>
<div style="left:435px;top:247px;width:93px;height:13px;background:linear-gradient(to bottom,#f2f2f2 0%,#ebebeb 50%,#dddddd 51%,#cfcfcf 100%);border:1px solid #8e8f8f;border-radius:2px;"></div>
<div class="t" style="left:454.0px;top:249.9px;font-size:10px;color:#1a1a1a;transform:scaleX(0.846);transform-origin:0 0;">Color Libraries</div>
<div style="left:351.5px;top:275.0px;width:9px;height:9px;border-radius:50%;border:1px solid #3b5f86;background:radial-gradient(circle at 50% 45%,#1d3a5c 0,#2b5a8a 35%,#b8d4ee 60%,#dde9f5 100%);"></div>
<div class="t" style="left:364.0px;top:275.3px;font-size:10px;color:#2c2c2c;transform:scaleX(0.900);transform-origin:0 0;">H:</div>
<div style="left:383px;top:273px;width:32.5px;height:13.5px;background:#fff;border:1px solid #e6e6e6;border-top-color:#d6d6d6;"></div>
<div class="t" style="left:387.0px;top:275.6px;font-size:10px;color:#2c2c2c;transform:scaleX(1.079);transform-origin:0 0;">0</div>
<div class="t" style="left:420.5px;top:272.3px;font-size:10px;color:#2c2c2c;">°</div>
<div style="left:351.5px;top:293.0px;width:9px;height:9px;border-radius:50%;border:1px solid #9a9a9a;background:radial-gradient(circle at 40% 35%,#fff 0,#e6e6e6 50%,#cfcfcf 100%);"></div>
<div class="t" style="left:364.0px;top:293.3px;font-size:10px;color:#2c2c2c;transform:scaleX(0.952);transform-origin:0 0;">S:</div>
<div style="left:383px;top:290.5px;width:32.5px;height:13.5px;background:#fff;border:1px solid #e6e6e6;border-top-color:#d6d6d6;"></div>
<div class="t" style="left:387.0px;top:293.1px;font-size:10px;color:#2c2c2c;transform:scaleX(1.079);transform-origin:0 0;">1</div>
<div class="t" style="left:419.0px;top:293.3px;font-size:10px;color:#2c2c2c;transform:scaleX(1.011);transform-origin:0 0;">%</div>
<div style="left:351.5px;top:311.0px;width:9px;height:9px;border-radius:50%;border:1px solid #9a9a9a;background:radial-gradient(circle at 40% 35%,#fff 0,#e6e6e6 50%,#cfcfcf 100%);"></div>
<div class="t" style="left:364.0px;top:311.3px;font-size:10px;color:#2c2c2c;transform:scaleX(0.952);transform-origin:0 0;">B:</div>
<div style="left:383px;top:309px;width:32.5px;height:13.5px;background:#fff;border:1px solid #e6e6e6;border-top-color:#d6d6d6;"></div>
<div class="t" style="left:387.0px;top:311.6px;font-size:10px;color:#2c2c2c;transform:scaleX(1.079);transform-origin:0 0;">66</div>
<div class="t" style="left:419.0px;top:311.3px;font-size:10px;color:#2c2c2c;transform:scaleX(1.011);transform-origin:0 0;">%</div>
<div style="left:351.5px;top:332.0px;width:9px;height:9px;border-radius:50%;border:1px solid #9a9a9a;background:radial-gradient(circle at 40% 35%,#fff 0,#e6e6e6 50%,#cfcfcf 100%);"></div>
<div class="t" style="left:364.0px;top:332.3px;font-size:10px;color:#2c2c2c;transform:scaleX(0.900);transform-origin:0 0;">R:</div>
<div style="left:383px;top:329px;width:32.5px;height:15px;background:#fff;border:1px solid #a9cbe8;border-top-color:#7aaedb;"></div>
<div class="t" style="left:387.0px;top:332.3px;font-size:10px;color:#2c2c2c;transform:scaleX(1.019);transform-origin:0 0;">168</div>
<div style="left:351.5px;top:350.5px;width:9px;height:9px;border-radius:50%;border:1px solid #9a9a9a;background:radial-gradient(circle at 40% 35%,#fff 0,#e6e6e6 50%,#cfcfcf 100%);"></div>
<div class="t" style="left:364.0px;top:350.8px;font-size:10px;color:#2c2c2c;transform:scaleX(0.947);transform-origin:0 0;">G:</div>
<div style="left:383px;top:348px;width:32.5px;height:14px;background:#fff;border:1px solid #e6e6e6;border-top-color:#d6d6d6;"></div>
<div class="t" style="left:387.0px;top:350.8px;font-size:10px;color:#2c2c2c;transform:scaleX(1.019);transform-origin:0 0;">167</div>
<div style="left:351.5px;top:368.5px;width:9px;height:9px;border-radius:50%;border:1px solid #9a9a9a;background:radial-gradient(circle at 40% 35%,#fff 0,#e6e6e6 50%,#cfcfcf 100%);"></div>
<div class="t" style="left:364.0px;top:368.8px;font-size:10px;color:#2c2c2c;transform:scaleX(0.952);transform-origin:0 0;">B:</div>
<div style="left:383px;top:366px;width:32.5px;height:14px;background:#fff;border:1px solid #e6e6e6;border-top-color:#d6d6d6;"></div>
<div class="t" style="left:387.0px;top:368.8px;font-size:10px;color:#2c2c2c;transform:scaleX(1.019);transform-origin:0 0;">167</div>
<div style="left:453.5px;top:275.0px;width:9px;height:9px;border-radius:50%;border:1px solid #9a9a9a;background:radial-gradient(circle at 40% 35%,#fff 0,#e6e6e6 50%,#cfcfcf 100%);"></div>
<div class="t" style="left:465.0px;top:275.3px;font-size:10px;color:#2c2c2c;transform:scaleX(1.079);transform-origin:0 0;">L:</div>
<div style="left:483px;top:273px;width:41px;height:13.5px;background:#fff;border:1px solid #e6e6e6;border-top-color:#d6d6d6;"></div>
<div class="t" style="left:487.0px;top:275.6px;font-size:10px;color:#2c2c2c;transform:scaleX(1.079);transform-origin:0 0;">68</div>
<div style="left:453.5px;top:293.0px;width:9px;height:9px;border-radius:50%;border:1px solid #9a9a9a;background:radial-gradient(circle at 40% 35%,#fff 0,#e6e6e6 50%,#cfcfcf 100%);"></div>
<div class="t" style="left:465.0px;top:293.3px;font-size:10px;color:#2c2c2c;transform:scaleX(1.079);transform-origin:0 0;">a:</div>
<div style="left:483px;top:290.5px;width:41px;height:13.5px;background:#fff;border:1px solid #e6e6e6;border-top-color:#d6d6d6;"></div>
<div class="t" style="left:487.0px;top:293.1px;font-size:10px;color:#2c2c2c;transform:scaleX(1.079);transform-origin:0 0;">0</div>
<div style="left:453.5px;top:311.0px;width:9px;height:9px;border-radius:50%;border:1px solid #9a9a9a;background:radial-gradient(circle at 40% 35%,#fff 0,#e6e6e6 50%,#cfcfcf 100%);"></div>
<div class="t" style="left:465.0px;top:311.3px;font-size:10px;color:#2c2c2c;transform:scaleX(1.079);transform-origin:0 0;">b:</div>
<div style="left:483px;top:309px;width:41px;height:13.5px;background:#fff;border:1px solid #e6e6e6;border-top-color:#d6d6d6;"></div>
<div class="t" style="left:487.0px;top:311.6px;font-size:10px;color:#2c2c2c;transform:scaleX(1.079);transform-origin:0 0;">0</div>
<div class="t" style="left:468.0px;top:332.3px;font-size:10px;color:#2c2c2c;">C:</div>
<div style="left:483px;top:329px;width:32.60000000000002px;height:15px;background:#fff;border:1px solid #e6e6e6;border-top-color:#d6d6d6;"></div>
<div class="t" style="left:487.0px;top:332.3px;font-size:10px;color:#2c2c2c;transform:scaleX(1.079);transform-origin:0 0;">36</div>
<div class="t" style="left:519.6px;top:332.3px;font-size:10px;color:#2c2c2c;transform:scaleX(1.011);transform-origin:0 0;">%</div>
<div class="t" style="left:468.0px;top:350.8px;font-size:10px;color:#2c2c2c;transform:scaleX(0.900);transform-origin:0 0;">M:</div>
<div style="left:483px;top:348px;width:32.60000000000002px;height:14px;background:#fff;border:1px solid #e6e6e6;border-top-color:#d6d6d6;"></div>
<div class="t" style="left:487.0px;top:350.8px;font-size:10px;color:#2c2c2c;transform:scaleX(1.079);transform-origin:0 0;">30</div>
<div class="t" style="left:519.6px;top:350.8px;font-size:10px;color:#2c2c2c;transform:scaleX(1.011);transform-origin:0 0;">%</div>
<div class="t" style="left:468.0px;top:368.8px;font-size:10px;color:#2c2c2c;transform:scaleX(1.123);transform-origin:0 0;">Y:</div>
<div style="left:483px;top:366px;width:32.60000000000002px;height:14px;background:#fff;border:1px solid #e6e6e6;border-top-color:#d6d6d6;"></div>
<div class="t" style="left:487.0px;top:368.8px;font-size:10px;color:#2c2c2c;transform:scaleX(1.079);transform-origin:0 0;">30</div>
<div class="t" style="left:519.6px;top:368.8px;font-size:10px;color:#2c2c2c;transform:scaleX(1.011);transform-origin:0 0;">%</div>
<div class="t" style="left:468.0px;top:386.3px;font-size:10px;color:#2c2c2c;transform:scaleX(1.058);transform-origin:0 0;">K:</div>
<div style="left:483px;top:384px;width:32.60000000000002px;height:13px;background:#fff;border:1px solid #e6e6e6;border-top-color:#d6d6d6;"></div>
<div class="t" style="left:487.0px;top:386.3px;font-size:10px;color:#2c2c2c;transform:scaleX(1.079);transform-origin:0 0;">0</div>
<div class="t" style="left:519.6px;top:386.3px;font-size:10px;color:#2c2c2c;transform:scaleX(1.011);transform-origin:0 0;">%</div>
<div class="t" style="left:356.0px;top:388.8px;font-size:10px;color:#2c2c2c;transform:scaleX(1.079);transform-origin:0 0;">#</div>
<div style="left:364.6px;top:386.6px;width:81.39999999999998px;height:13.399999999999977px;background:#fff;border:1px solid #e6e6e6;border-top-color:#d6d6d6;"></div>
<div class="t" style="left:368.6px;top:389.1px;font-size:10px;color:#2c2c2c;transform:scaleX(0.839);transform-origin:0 0;">a8a7a7</div>
<div style="left:123px;top:388px;width:10px;height:10px;border:1px solid #8f8f8f;background:linear-gradient(135deg,#dcdcdc,#fbfbfb);"></div>
<div class="t" style="left:136.0px;top:388.8px;font-size:10px;color:#2c2c2c;transform:scaleX(0.894);transform-origin:0 0;">Only Web Colors</div>
<div style="left:583px;top:54px;width:342px;height:373px;border-radius:6px 6px 2px 2px;border:1px solid #151515;box-shadow:0 3px 12px 3px rgba(0,0,0,0.5);background:linear-gradient(to right,#a8a8a8 0,#b2b2b2 62px,#6a6a6a 82px,#424242 98px,#5a5a5a 118px,#4a4a4a 138px,#3a3a3a 170px,#3c3c3c 220px,#555 255px,#8a8a8a 341px);"></div>
<div style="left:584px;top:55px;width:340px;height:20px;border-radius:5px 5px 0 0;background:linear-gradient(to bottom,rgba(255,255,255,0.2),rgba(255,255,255,0) 60%);"></div>
<div class="t" style="left:588.5px;top:60.8px;font-size:10px;color:#2c2c2c;transform:scaleX(0.899);transform-origin:0 0;">Gradient Editor</div>
<div style="left:584px;top:75px;width:5px;height:346px;background:linear-gradient(to bottom,#bdbdbd 0,#b0b0b0 85px,#3a3a3a 95px,#3a3a3a 100%);"></div>
<div style="left:586px;top:164px;width:3px;height:257px;background:#8a8a8a;"></div>
<div style="left:918px;top:75px;width:6px;height:346px;background:linear-gradient(to right,#bdbdbd,#9a9a9a 50%,#7a7a7a);"></div>
<div style="left:584px;top:421px;width:340px;height:5px;background:linear-gradient(to right,#5a5a5a,#6a6a6a);"></div>
<div style="left:584px;top:425px;width:340px;height:1px;background:rgba(220,220,220,0.6);"></div>
<div style="left:842px;top:55px;width:42px;height:14px;border:1px solid #3a3a3a;border-top:none;border-radius:0 0 0 4px;background:linear-gradient(to bottom,#c8c8c8 0,#a8a8a8 45%,#7a7a7a 55%,#8e8e8e 100%);"></div>
<div style="left:863px;top:55px;width:1px;height:14px;background:#4a4a4a;"></div>
<div style="left:849px;top:63px;width:12px;height:3px;background:#d8d8d8;border:1px solid #555;"></div>
<div style="left:869px;top:59px;width:10px;height:7px;border:2px solid #fff;box-shadow:0 0 0 1px #333;"></div>
<div style="left:883px;top:55px;width:36px;height:14px;border:1px solid #5a2018;border-top:none;border-radius:0 0 4px 0;background:linear-gradient(to bottom,#e8a493 0,#d9735e 40%,#c0391f 55%,#d2543a 80%,#e48c73 100%);"></div>
<div class="t" style="left:897.9px;top:56.9px;font-size:11px;color:#ffffff;font-weight:bold;text-shadow:0 0 2px #600;">x</div>
<div style="left:589px;top:76.5px;width:329px;height:345.5px;background:#f0f0f0;border:1px solid #8a8a8a;"></div>
<div style="left:596px;top:90px;width:243px;height:103px;border:1px solid #d0d0d0;box-shadow:inset 1px 1px 0 #fafafa, 1px 1px 0 #fafafa;"></div>
<div style="left:608px;top:85px;width:38px;height:10px;background:#f0f0f0;"></div>
<div class="t" style="left:612.5px;top:85.8px;font-size:10px;color:#2c2c2c;transform:scaleX(0.885);transform-origin:0 0;">Presets</div>
<svg style="position:absolute;left:813px;top:84px" width="14" height="12" viewBox="0 0 14 12"><circle cx="6" cy="6" r="3.2" fill="none" stroke="#4a4a4a" stroke-width="2"/><g stroke="#4a4a4a" stroke-width="1.6"><path d="M6 0.5V2.5M6 9.5V11.5M0.5 6H2.5M9.5 6H11.5M2 2L3.4 3.4M8.6 8.6L10 10M2 10L3.4 8.6M8.6 3.4L10 2"/></g><rect x="12" y="8" width="1.5" height="1.5" fill="#333"/></svg>
<div style="left:604px;top:101px;width:229px;height:86px;background:#f4f4f4;border:1px solid #a6a6a6;"></div>
<div style="left:605px;top:102px;width:215px;height:84px;background:#c3c3c3;"></div>
<div style="left:605px;top:102px;width:24px;height:24px;background:linear-gradient(135deg,#000 20%,#fff 80%);box-shadow:inset 0 0 0 1px rgba(0,0,0,0.15);"></div>
<div style="left:629px;top:102px;width:24px;height:24px;background-color:#ffffff;background-image:linear-gradient(45deg,#c8c8c8 25%,transparent 25%,transparent 75%,#c8c8c8 75%),linear-gradient(45deg,#c8c8c8 25%,transparent 25%,transparent 75%,#c8c8c8 75%);background-size:6px 6px;background-position:0 0,3px 3px;background-image:linear-gradient(135deg,#000 15%,rgba(0,0,0,0) 70%),linear-gradient(45deg,#c8c8c8 25%,transparent 25%,transparent 75%,#c8c8c8 75%),linear-gradient(45deg,#c8c8c8 25%,transparent 25%,transparent 75%,#c8c8c8 75%);background-size:100% 100%,6px 6px,6px 6px;background-position:0 0,0 0,3px 3px;box-shadow:inset 0 0 0 1px rgba(0,0,0,0.15);"></div>
<div style="left:653px;top:102px;width:24px;height:24px;background:linear-gradient(135deg,#000 20%,#fff 80%);box-shadow:inset 0 0 0 1px rgba(0,0,0,0.15);"></div>
<div style="left:677px;top:102px;width:24px;height:24px;background:linear-gradient(135deg,#e01010 20%,#0a6a0a 80%);box-shadow:inset 0 0 0 1px rgba(0,0,0,0.15);"></div>
<div style="left:701px;top:102px;width:24px;height:24px;background:linear-gradient(135deg,#2a0a6a 10%,#ff7a00 90%);box-shadow:inset 0 0 0 1px rgba(0,0,0,0.15);"></div>
<div style="left:725px;top:102px;width:24px;height:24px;background:linear-gradient(135deg,#0010c8 15%,#ff0000 50%,#ffee00 85%);box-shadow:inset 0 0 0 1px rgba(0,0,0,0.15);"></div>
<div style="left:749px;top:102px;width:24px;height:24px;background:linear-gradient(135deg,#1010a0 30%,#e8e020 50%,#1010a0 70%);box-shadow:inset 0 0 0 1px rgba(0,0,0,0.15);"></div>
<div style="left:773px;top:102px;width:24px;height:24px;background:linear-gradient(135deg,#ff6a00 15%,#ffee00 50%,#ff6a00 85%);box-shadow:inset 0 0 0 1px rgba(0,0,0,0.15);"></div>
<div style="left:797px;top:102px;width:24px;height:24px;background:linear-gradient(135deg,#6a1a8a 15%,#0a6a1a 50%,#ff8000 85%);box-shadow:inset 0 0 0 1px rgba(0,0,0,0.15);"></div>
<div style="left:605px;top:126px;width:24px;height:24px;background:linear-gradient(135deg,#ffe000 15%,#8a1a6a 35%,#ff7000 60%,#10307a 85%);box-shadow:inset 0 0 0 1px rgba(0,0,0,0.15);"></div>
<div style="left:629px;top:126px;width:24px;height:24px;background:linear-gradient(135deg,#7a3a10 10%,#f0c0a0 50%,#6a3010 90%);box-shadow:inset 0 0 0 1px rgba(0,0,0,0.15);"></div>
<div style="left:653px;top:126px;width:24px;height:24px;background:linear-gradient(135deg,#2a70c0 10%,#ffffff 45%,#b08000 60%,#ffffff 90%);box-shadow:inset 0 0 0 1px rgba(0,0,0,0.15);"></div>
<div style="left:677px;top:126px;width:24px;height:24px;background:linear-gradient(135deg,#ff0000 10%,#ff00ff 25%,#0000ff 40%,#00ffff 55%,#00ff00 70%,#ffff00 85%,#ff0000 95%);box-shadow:inset 0 0 0 1px rgba(0,0,0,0.15);"></div>
<div style="left:701px;top:126px;width:24px;height:24px;background-color:#ffffff;background-image:linear-gradient(45deg,#c8c8c8 25%,transparent 25%,transparent 75%,#c8c8c8 75%),linear-gradient(45deg,#c8c8c8 25%,transparent 25%,transparent 75%,#c8c8c8 75%);background-size:6px 6px;background-position:0 0,3px 3px;background-image:linear-gradient(135deg,rgba(255,0,0,0) 10%,#ff0000 20%,#ffff00 35%,#00ff00 50%,#00ffff 65%,#0000ff 75%,#ff00ff 85%,rgba(255,0,255,0) 95%),linear-gradient(45deg,#c8c8c8 25%,transparent 25%,transparent 75%,#c8c8c8 75%),linear-gradient(45deg,#c8c8c8 25%,transparent 25%,transparent 75%,#c8c8c8 75%);background-size:100% 100%,6px 6px,6px 6px;background-position:0 0,0 0,3px 3px;box-shadow:inset 0 0 0 1px rgba(0,0,0,0.15);"></div>
<div style="left:725px;top:126px;width:24px;height:24px;background:repeating-linear-gradient(135deg,#000 0,#000 3px,#fff 3px,#fff 6px);box-shadow:inset 0 0 0 1px rgba(0,0,0,0.15);"></div>
<div style="left:749px;top:126px;width:24px;height:24px;background-color:#ffffff;background-image:linear-gradient(45deg,#c8c8c8 25%,transparent 25%,transparent 75%,#c8c8c8 75%),linear-gradient(45deg,#c8c8c8 25%,transparent 25%,transparent 75%,#c8c8c8 75%);background-size:6px 6px;background-position:0 0,3px 3px;background-image:linear-gradient(135deg,rgba(0,0,0,0.5) 0%,rgba(0,0,0,0) 80%),linear-gradient(45deg,#c8c8c8 25%,transparent 25%,transparent 75%,#c8c8c8 75%),linear-gradient(45deg,#c8c8c8 25%,transparent 25%,transparent 75%,#c8c8c8 75%);background-size:100% 100%,6px 6px,6px 6px;background-position:0 0,0 0,3px 3px;box-shadow:inset 0 0 0 1px rgba(0,0,0,0.15);"></div>
<div class="t" style="left:823.5px;top:105.5px;font-size:6px;color:#8a8a8a;">▲</div>
<div class="t" style="left:823.5px;top:177.5px;font-size:6px;color:#8a8a8a;">▼</div>
<div class="t" style="left:596.0px;top:209.6px;font-size:10px;color:#2c2c2c;transform:scaleX(0.873);transform-origin:0 0;">Name:</div>
<div style="left:634.7px;top:206px;width:205.29999999999995px;height:14px;background:#fff;border:1px solid #e6e6e6;border-top-color:#d6d6d6;"></div>
<div class="t" style="left:639.0px;top:208.8px;font-size:10px;color:#2c2c2c;transform:scaleX(0.900);transform-origin:0 0;">Custom</div>
<div style="left:853.5px;top:89px;width:56.5px;height:14px;background:linear-gradient(to bottom,#eaf6fd 0%,#d9f0fc 50%,#bee6fd 51%,#a7d9f5 100%);border:1px solid #3c7fb1;border-radius:2px;"></div>
<div class="t" style="left:874.2px;top:92.4px;font-size:10px;color:#1a1a1a;transform:scaleX(1.038);transform-origin:0 0;">OK</div>
<div style="left:853.5px;top:110px;width:56.5px;height:14px;background:linear-gradient(to bottom,#f2f2f2 0%,#ebebeb 50%,#dddddd 51%,#cfcfcf 100%);border:1px solid #8e8f8f;border-radius:2px;"></div>
<div class="t" style="left:867.8px;top:113.4px;font-size:10px;color:#1a1a1a;transform:scaleX(0.899);transform-origin:0 0;">Cancel</div>
<div style="left:853.5px;top:136.5px;width:56.5px;height:13.5px;background:linear-gradient(to bottom,#f2f2f2 0%,#ebebeb 50%,#dddddd 51%,#cfcfcf 100%);border:1px solid #8e8f8f;border-radius:2px;"></div>
<div class="t" style="left:867.8px;top:139.7px;font-size:10px;color:#1a1a1a;transform:scaleX(0.915);transform-origin:0 0;">Load...</div>
<div style="left:853.5px;top:157.5px;width:56.5px;height:13.5px;background:linear-gradient(to bottom,#f2f2f2 0%,#ebebeb 50%,#dddddd 51%,#cfcfcf 100%);border:1px solid #8e8f8f;border-radius:2px;"></div>
<div class="t" style="left:867.8px;top:160.7px;font-size:10px;color:#1a1a1a;transform:scaleX(0.899);transform-origin:0 0;">Save...</div>
<div style="left:853.5px;top:207px;width:56.5px;height:14px;background:linear-gradient(to bottom,#f2f2f2 0%,#ebebeb 50%,#dddddd 51%,#cfcfcf 100%);border:1px solid #8e8f8f;border-radius:2px;"></div>
<div class="t" style="left:872.8px;top:210.4px;font-size:10px;color:#1a1a1a;transform:scaleX(0.899);transform-origin:0 0;">New</div>
<div style="left:846.5px;top:80px;width:72.5px;height:33px;border:4px solid #d42a33;"></div>
<div style="left:597px;top:238px;width:312px;height:165px;border:1px solid #d0d0d0;box-shadow:inset 1px 1px 0 #fafafa, 1px 1px 0 #fafafa;"></div>
<div style="left:615px;top:233px;width:125px;height:12px;background:#f0f0f0;"></div>
<div class="t" style="left:621.0px;top:237.2px;font-size:10px;color:#2c2c2c;transform:scaleX(0.932);transform-origin:0 0;">Gradient Type:</div>
<div style="left:685.8px;top:232.5px;width:46px;height:17px;background:#fff;border:1px solid #e4e4e4;"></div>
<div class="t" style="left:690.5px;top:237.2px;font-size:10px;color:#2c2c2c;transform:scaleX(0.809);transform-origin:0 0;">Solid</div>
<svg style="position:absolute;left:723px;top:239px" width="8" height="5"><path d="M0 0H7L3.5 4Z" fill="#111"/></svg>
<div class="t" style="left:604.5px;top:260.3px;font-size:10px;color:#2c2c2c;transform:scaleX(0.898);transform-origin:0 0;">Smoothness:</div>
<div style="left:660.5px;top:256.5px;width:40px;height:16.5px;background:#fff;border:1px solid #cfcfcf;"></div>
<div style="left:683.4px;top:257.5px;width:16.2px;height:14.5px;background:linear-gradient(to right,#e8e8e8,#d4d4d4);border-left:1px solid #cfcfcf;"></div>
<div style="left:690.5px;top:264px;width:2px;height:2px;background:#8a8a8a;"></div>
<div class="t" style="left:664.7px;top:260.3px;font-size:10px;color:#2c2c2c;transform:scaleX(0.959);transform-origin:0 0;">100</div>
<div class="t" style="left:704.5px;top:260.3px;font-size:10px;color:#2c2c2c;transform:scaleX(1.011);transform-origin:0 0;">%</div>
<div style="left:608px;top:293px;width:290px;height:20px;background-color:#ffffff;background-image:linear-gradient(45deg,#c9c9c9 25%,transparent 25%,transparent 75%,#c9c9c9 75%),linear-gradient(45deg,#c9c9c9 25%,transparent 25%,transparent 75%,#c9c9c9 75%);background-size:8px 8px;background-position:0 0,4px 4px;border:1px solid #9a9a9a;"></div>
<div style="left:609px;top:294px;width:288px;height:18px;background:linear-gradient(to right,#a8a7a7 0%,rgba(168,167,167,0) 100%);"></div>
<svg style="position:absolute;left:604px;top:279px" width="10" height="14" viewBox="0 0 10 14"><path d="M0.5 0.5H9.5V9L5 13.5L0.5 9Z" fill="#fff" stroke="#555"/><rect x="2" y="2" width="6" height="6" fill="#000"/></svg>
<svg style="position:absolute;left:892px;top:279px" width="10" height="14" viewBox="0 0 10 14"><path d="M0.5 0.5H9.5V9L5 13.5L0.5 9Z" fill="#fff" stroke="#555"/><rect x="2" y="2" width="6" height="6" fill="#fff" stroke="#bbb" stroke-width="0.5"/></svg>
<svg style="position:absolute;left:604px;top:313px" width="10" height="14" viewBox="0 0 10 14"><path d="M5 0.5L9.5 5V13.5H0.5V5Z" fill="#fff" stroke="#444"/><path d="M5 1.5L9 5.2H1Z" fill="#222"/><rect x="2" y="6.5" width="6" height="6" fill="#a8a7a7"/></svg>
<svg style="position:absolute;left:892px;top:313px" width="10" height="14" viewBox="0 0 10 14"><path d="M5 0.5L9.5 5V13.5H0.5V5Z" fill="#fff" stroke="#666"/><rect x="2" y="6.5" width="6" height="6" fill="#000"/></svg>
<svg style="position:absolute;left:749px;top:312px" width="8" height="8" viewBox="0 0 8 8"><path d="M4 0.8L7.2 4L4 7.2L0.8 4Z" fill="#fff" stroke="#333" stroke-width="1"/></svg>
<div style="left:603.5px;top:339.5px;width:300px;height:58px;border:1px solid #d0d0d0;box-shadow:inset 1px 1px 0 #fafafa, 1px 1px 0 #fafafa;"></div>
<div style="left:615px;top:334px;width:33px;height:11px;background:#f0f0f0;"></div>
<div class="t" style="left:620.0px;top:334.6px;font-size:10px;color:#2c2c2c;transform:scaleX(0.899);transform-origin:0 0;">Stops</div>
<div class="t" style="left:623.5px;top:353.2px;font-size:10px;color:#a8a8a8;transform:scaleX(0.880);transform-origin:0 0;">Opacity:</div>
<div style="left:660.6px;top:349.3px;width:40px;height:16.6px;background:#f4f4f4;border:1px solid #d0d0d0;"></div>
<div style="left:683.4px;top:350.3px;width:16.2px;height:14.6px;border-left:1px solid #d8d8d8;"></div>
<div style="left:690.5px;top:357px;width:2px;height:2px;background:#b0b0b0;"></div>
<div class="t" style="left:703.3px;top:353.2px;font-size:10px;color:#a8a8a8;transform:scaleX(1.011);transform-origin:0 0;">%</div>
<div class="t" style="left:729.0px;top:353.8px;font-size:10px;color:#a8a8a8;transform:scaleX(0.911);transform-origin:0 0;">Location:</div>
<div style="left:770px;top:351px;width:41.6px;height:14.6px;background:#f2f2f2;border:1px solid #d4d4d4;"></div>
<div class="t" style="left:815.0px;top:353.8px;font-size:10px;color:#a8a8a8;transform:scaleX(1.011);transform-origin:0 0;">%</div>
<div style="left:838.4px;top:352px;width:56.200000000000045px;height:13.5px;background:#f4f4f4;border:1px solid #adb2b5;border-radius:2px;"></div>
<div class="t" style="left:853.0px;top:355.2px;font-size:10px;color:#a0a0a0;transform:scaleX(0.934);transform-origin:0 0;">Delete</div>
<div class="t" style="left:634.5px;top:378.2px;font-size:10px;color:#2c2c2c;transform:scaleX(0.851);transform-origin:0 0;">Color:</div>
<div style="left:661.2px;top:375px;width:40.4px;height:14.7px;background:#a8a7a7;"></div>
<div style="left:703.3px;top:375px;width:11.5px;height:14.7px;background:#fafafa;border:1px solid #9a9a9a;"></div>
<svg style="position:absolute;left:706px;top:378px" width="6" height="9"><path d="M0.5 0.5V8.5L5.5 4.5Z" fill="#000"/></svg>
<div class="t" style="left:729.0px;top:378.4px;font-size:10px;color:#2c2c2c;transform:scaleX(0.911);transform-origin:0 0;">Location:</div>
<div style="left:770px;top:375.6px;width:41.60000000000002px;height:14.0px;background:#fff;border:1px solid #e6e6e6;border-top-color:#d6d6d6;"></div>
<div class="t" style="left:774.0px;top:378.4px;font-size:10px;color:#2c2c2c;transform:scaleX(1.079);transform-origin:0 0;">0</div>
<div class="t" style="left:815.0px;top:378.4px;font-size:10px;color:#2c2c2c;transform:scaleX(1.011);transform-origin:0 0;font-weight:bold;">%</div>
<div style="left:838.4px;top:376px;width:56.200000000000045px;height:13.5px;background:#f4f4f4;border:1px solid #adb2b5;border-radius:2px;"></div>
<div class="t" style="left:853.0px;top:379.2px;font-size:10px;color:#a0a0a0;transform:scaleX(0.934);transform-origin:0 0;">Delete</div>
<div style="left:648.9px;top:368.4px;width:73.5px;height:28.6px;border:4px solid #d42a33;"></div>
<svg style="position:absolute;left:0;top:0" width="1024" height="558" viewBox="0 0 1024 558">
<g opacity="0.86">
<ellipse cx="900" cy="490" rx="5" ry="11" fill="#8c8c8c"/>
<ellipse cx="1007" cy="490" rx="5" ry="11" fill="#8c8c8c"/>
<path d="M903 508 C899 468 908 442 953 442 C998 442 1007 468 1003 508 Q1002 516 992 520 L992 560 L912 560 L912 520 Q904 516 903 508 Z" fill="#c02a2c"/>
<path d="M921 447 Q932 433 945 441" stroke="#2c2c2c" stroke-width="4" fill="none" stroke-linecap="round"/>
<path d="M962 441 Q975 433 986 447" stroke="#2c2c2c" stroke-width="4" fill="none" stroke-linecap="round"/>
<path d="M906 508 Q893 516 892 534 L916 540 L918 512 Z" fill="#c02a2c"/>
<path d="M912 520 Q953 526 992 520" stroke="#9c2022" stroke-width="1" fill="none"/>
<ellipse cx="936" cy="468.7" rx="14.2" ry="17.8" fill="#c9c9c9"/>
<ellipse cx="935.7" cy="468" rx="12" ry="15.5" fill="#181818"/>
<circle cx="931" cy="461" r="5.6" fill="#b4b4b4"/>
<ellipse cx="970.6" cy="468.7" rx="14.2" ry="17.8" fill="#c9c9c9"/>
<ellipse cx="970.9" cy="468" rx="12" ry="15.5" fill="#181818"/>
<circle cx="977.5" cy="460.5" r="5.6" fill="#b4b4b4"/>
<path d="M940 494 Q953 501 966 496 Q963 508 953 508 Q943 506 940 494 Z" fill="#d6d6d6"/>
<path d="M942 497.5 Q953 503 964 499" stroke="#8a2020" stroke-width="0.9" fill="none"/>
<path d="M988 514 Q988 510 992 510 L1008 510 Q1012 510 1012 514 L1012 556 L988 556 Z" fill="#33363e"/>
<rect x="1000" y="515" width="3" height="36" fill="#656a74"/>
<ellipse cx="897" cy="535" rx="21" ry="20" fill="#363a44"/>
<ellipse cx="891" cy="528" rx="11" ry="6.5" fill="#7a8292"/>
<text x="954" y="548" font-family="Liberation Sans" font-weight="bold" font-size="18" fill="#e8d6d6" fill-opacity="0.9" text-anchor="middle" letter-spacing="-0.3">inwepo</text>
</g></svg>
</body></html>
